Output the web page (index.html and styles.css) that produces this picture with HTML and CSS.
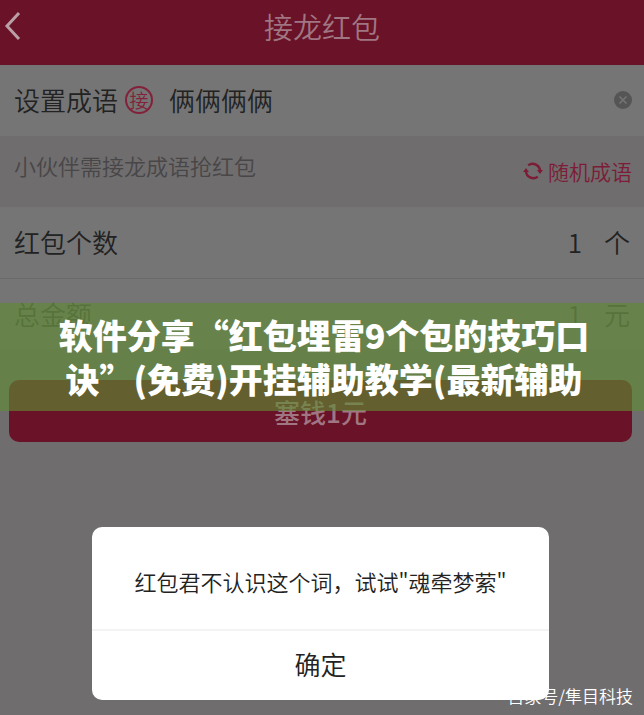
FILE: index.html
```html
<!DOCTYPE html>
<html lang="zh-CN">
<head>
    <meta charset="UTF-8">
    <meta name="viewport" content="width=device-width, initial-scale=1.0">
    <title>接龙红包</title>
    <link rel="stylesheet" href="styles.css">
</head>
<body>
    <header class="navbar">
        <button class="back-btn" type="button" aria-label="返回">
            <svg width="18" height="30" viewBox="0 0 18 30"><path d="M15 2 L3 15 L15 28" fill="none" stroke="currentColor" stroke-width="3"/></svg>
        </button>
        <h1>接龙红包</h1>
    </header>

    <form class="form">
        <div class="row">
            <label for="idiom">设置成语</label>
            <span class="badge">接</span>
            <input class="idiom" id="idiom" type="text" value="俩俩俩俩">
            <button class="clear-btn" type="button" aria-label="清除">
                <svg width="18" height="18" viewBox="0 0 18 18"><circle cx="9" cy="9" r="9" fill="currentColor"/><path d="M5.5 5.5 L12.5 12.5 M12.5 5.5 L5.5 12.5" stroke="#757575" stroke-width="1.6"/></svg>
            </button>
        </div>

        <div class="hint">
            <p>小伙伴需接龙成语抢红包</p>
            <button class="random-btn" type="button">
                <svg width="20" height="20" viewBox="0 0 20 20">
                    <path d="M5.2 4.4 A7.3 7.3 0 0 1 17 10 M14.8 15.6 A7.3 7.3 0 0 1 3 10" fill="none" stroke="currentColor" stroke-width="2.4"/>
                    <path d="M14 9 H20 L17 13 Z M0 11 H6 L3 7 Z" fill="currentColor"/>
                </svg>
                随机成语
            </button>
        </div>

        <div class="row">
            <label for="count">红包个数</label>
            <input class="amount" id="count" type="text" value="1">
            <span class="unit">个</span>
        </div>

        <div class="row row-total">
            <label for="total">总金额</label>
            <input class="amount" id="total" type="text" value="1">
            <span class="unit">元</span>
        </div>

        <button class="submit-btn" type="submit">塞钱1元</button>
    </form>

    <div class="banner">软件分享“红包埋雷9个包的技巧口诀”(免费)开挂辅助教学(最新辅助</div>

    <div class="dialog" role="dialog" aria-labelledby="message">
        <p class="message" id="message">红包君不认识这个词，试试"魂牵梦萦"</p>
        <button class="confirm-btn" type="button">确定</button>
    </div>

    <div class="watermark">百家号/隼目科技</div>
</body>
</html>
```
FILE: styles.css
```css
* {
    box-sizing: border-box;
}

body {
    position: relative;
    min-height: 100vh;
    margin: 0;
    background: #6f6d6e;
    color: #222;
    font-family: "Noto Sans CJK SC", sans-serif;
    font-size: 26px;
    font-weight: 350;
}

h1,
p {
    margin: 0;
    font-weight: inherit;
}

button,
input {
    padding: 0;
    border: none;
    background: none;
    color: inherit;
    font: inherit;
}

button {
    cursor: pointer;
}

svg {
    display: block;
}

/* top bar */
.navbar {
    display: grid;
    grid-template-columns: 40px 1fr 40px;
    align-items: center;
    height: 65px;
    padding-bottom: 14px;
    background: #6a1227;
    color: #a07682;
}

.navbar h1 {
    font-size: 29px;
    line-height: 40px;
    text-align: center;
}

.back-btn {
    padding-left: 4px;
    color: #b9a0a7;
}

/* form rows */
.row {
    display: flex;
    align-items: center;
    height: 71px;
    padding: 0 12px 2px 14px;
    background: #757575;
}

.row-total {
    border-top: 1px solid #6a6a6a;
    color: #484848;
}

.badge {
    width: 28px;
    height: 28px;
    margin: 0 16px 0 7px;
    border: 2px solid #83213a;
    border-radius: 50%;
    color: #83213a;
    font-size: 19px;
    line-height: 23px;
    text-align: center;
}

.idiom {
    flex: 1;
    min-width: 0;
}

.clear-btn {
    color: #555;
}

.amount {
    flex: 1;
    min-width: 0;
    text-align: right;
}

.unit {
    margin: 0 2px 0 22px;
}

.hint {
    display: flex;
    justify-content: space-between;
    height: 71px;
    padding: 12px 12px 0 14px;
    color: #484647;
    font-size: 22px;
    line-height: 34px;
}

.random-btn {
    display: flex;
    align-items: center;
    gap: 5px;
    height: 46px;
    color: #7d1c36;
    font-size: 21px;
}

.submit-btn {
    display: block;
    width: calc(100% - 21px);
    height: 62px;
    margin: 31px 12px 0 9px;
    border-radius: 10px;
    background: #6a1227;
    color: #a07682;
    font-weight: 500;
}

/* green title strip */
.banner {
    position: absolute;
    top: 303px;
    left: 0;
    right: 0;
    padding: 10px 48px 10px 52px;
    background: rgba(95, 139, 52, 0.64);
    color: #fff;
    font-size: 34px;
    font-weight: 900;
    line-height: 44px;
    text-align: center;
}

/* dialog */
.dialog {
    position: absolute;
    bottom: 15px;
    left: 92px;
    right: 95px;
    border-radius: 10px;
    background: #fff;
    text-align: center;
}

.message {
    padding: 37px 0 31px;
    border-bottom: 2px solid #f3f3f3;
    font-size: 22px;
    line-height: 34px;
}

.confirm-btn {
    width: 100%;
    height: 69px;
    padding-bottom: 4px;
}

.watermark {
    position: absolute;
    right: 11px;
    bottom: 6px;
    color: #fff;
    font-size: 17px;
    line-height: 26px;
}
```
